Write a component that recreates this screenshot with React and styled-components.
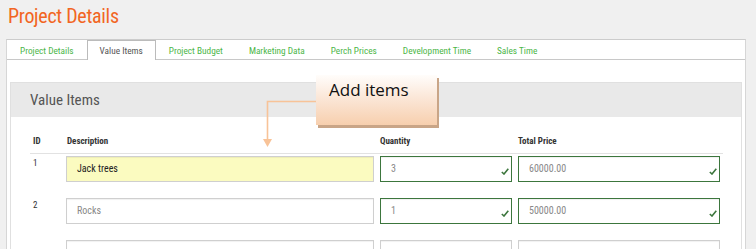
import React from 'react';
import styled, { createGlobalStyle } from 'styled-components';

const GlobalStyle = createGlobalStyle`
  body {
    margin: 0;
    background: #f0f0f0;
    font-family: Roboto, "Liberation Sans", sans-serif;
    font-stretch: 80%;
  }
`;

const Page = styled.div`
  position: relative;
  height: 249px;
  overflow: hidden;
  padding: 0 10px 0 6px;
`;

const Title = styled.h1`
  margin: 0;
  padding: 4px 0 0 2px;
  height: 36px;
  box-sizing: border-box;
  font-size: 20px;
  font-weight: 400;
  color: #f26522;
  letter-spacing: -0.3px;
`;

const Panel = styled.div`
  background: #fff;
  border: 1px solid #d6d6d6;
  border-top-color: #ccc;
  height: 260px;
  margin-top: 3px;
`;

const Tabs = styled.div`
  display: flex;
  height: 19px;
  border-bottom: 1px solid #c8c8c8;
`;

const Tab = styled.div`
  padding: 0 12px;
  font-size: 9.3px;
  line-height: 19px;
  color: ${p => (p.$active ? '#555' : '#4cb648')};
  background: #fff;
  border: 1px solid ${p => (p.$active ? '#bbb' : 'transparent')};
  border-bottom: none;
  margin-bottom: -1px;
  height: ${p => (p.$active ? '20px' : '19px')};
  box-sizing: border-box;
  white-space: nowrap;
`;

const Card = styled.div`
  margin: 22px 3px 0 3px;
  border: 1px solid #e0e0e0;
  border-bottom: none;
  height: 200px;
`;

const CardHeader = styled.div`
  background: #e9e9e9;
  height: 34px;
  padding-left: 19px;
  font-size: 15px;
  line-height: 34px;
  color: #555;
`;

const CardBody = styled.div`
  padding: 19px 20px 0 19px;
`;

const Grid = styled.div`
  display: grid;
  grid-template-columns: 30px 308px 132px 202px;
  column-gap: 6px;
  width: 692px;
`;

const HeadCell = styled.div`
  font-size: 9px;
  font-weight: 700;
  color: #333;
  padding: 0 0 7px;
  padding-left: ${p => p.$pad || '3px'};
  border-bottom: 1px solid #e2e2e2;
  margin-right: ${p => (p.$last ? '-3px' : '-6px')};
`;

const IdCell = styled.div`
  font-size: 9px;
  color: #333;
  padding: 4px 0 0 3px;
  margin-top: ${p => (p.$first ? '0' : '14px')};
`;

const Field = styled.div`
  position: relative;
  height: 26px;
  margin-top: ${p => (p.$first ? '2px' : '16px')};
`;

const Input = styled.div`
  height: 100%;
  box-sizing: border-box;
  border: 1px solid ${p => (p.$ok ? '#3c763d' : '#cfcfcf')};
  background: ${p => (p.$hl ? '#fbfbc0' : '#fff')};
  box-shadow: inset 0 1px 1px rgba(0, 0, 0, 0.06);
  padding-left: 10px;
  font-size: 10px;
  line-height: 24px;
  color: ${p => (p.$hl ? '#222' : '#888')};
`;

const Check = styled.svg`
  position: absolute;
  right: 3px;
  top: 12px;
  width: 8px;
  height: 7px;
`;

const Callout = styled.div`
  position: absolute;
  left: 316px;
  top: 75px;
  width: 121px;
  height: 50px;
  box-sizing: border-box;
  padding: 3px 0 0 13px;
  background: linear-gradient(#fffdfb, #fbe7d8 45%, #f7cfae);
  box-shadow: 2px 3px 0 #c9a587;
  font-family: "Open Sans", "Liberation Sans", sans-serif;
  font-stretch: 100%;
  font-size: 17px;
  color: #111;
`;

const Arrow = styled.svg`
  position: absolute;
  left: 260px;
  top: 96px;
`;

const CheckIcon = () => (
  <Check viewBox="0 0 8 7">
    <path d="M0.8 4 L3 6 L7.3 0.8" fill="none" stroke="#3c763d" strokeWidth="1.6" />
  </Check>
);

const rows = [
  { id: 1, desc: 'Jack trees', qty: '3', total: '60000.00', hl: true, ok: true },
  { id: 2, desc: 'Rocks', qty: '1', total: '50000.00', ok: true },
  { id: 3, desc: '', qty: '', total: '' },
];

const tabs = ['Project Details', 'Value Items', 'Project Budget', 'Marketing Data', 'Perch Prices', 'Development Time', 'Sales Time'];

export default function App() {
  return (
    <Page>
      <GlobalStyle />
      <Title>Project Details</Title>
      <Panel>
        <Tabs>
          {tabs.map(t => (
            <Tab key={t} $active={t === 'Value Items'}>{t}</Tab>
          ))}
        </Tabs>
        <Card>
          <CardHeader>Value Items</CardHeader>
          <CardBody>
            <Grid>
              <HeadCell>ID</HeadCell>
              <HeadCell $pad="1px">Description</HeadCell>
              <HeadCell $pad="0">Quantity</HeadCell>
              <HeadCell $pad="0" $last>Total Price</HeadCell>
              {rows.map((r, i) => (
                <React.Fragment key={r.id}>
                  <IdCell $first={i === 0}>{r.ok ? r.id : ''}</IdCell>
                  <Field $first={i === 0}>
                    <Input $hl={r.hl}>{r.desc}</Input>
                  </Field>
                  <Field $first={i === 0}>
                    <Input $ok={r.ok}>{r.qty}</Input>
                    {r.ok && <CheckIcon />}
                  </Field>
                  <Field $first={i === 0}>
                    <Input $ok={r.ok}>{r.total}</Input>
                    {r.ok && <CheckIcon />}
                  </Field>
                </React.Fragment>
              ))}
            </Grid>
          </CardBody>
        </Card>
      </Panel>
      <Arrow width="60" height="52" viewBox="0 0 60 52">
        <path d="M56 5.5 H7.5 V44" fill="none" stroke="#f8c398" strokeWidth="1.6" />
        <path d="M3 43 H12 L7.5 51 Z" fill="#f8c398" />
      </Arrow>
      <Callout>Add items</Callout>
    </Page>
  );
}
